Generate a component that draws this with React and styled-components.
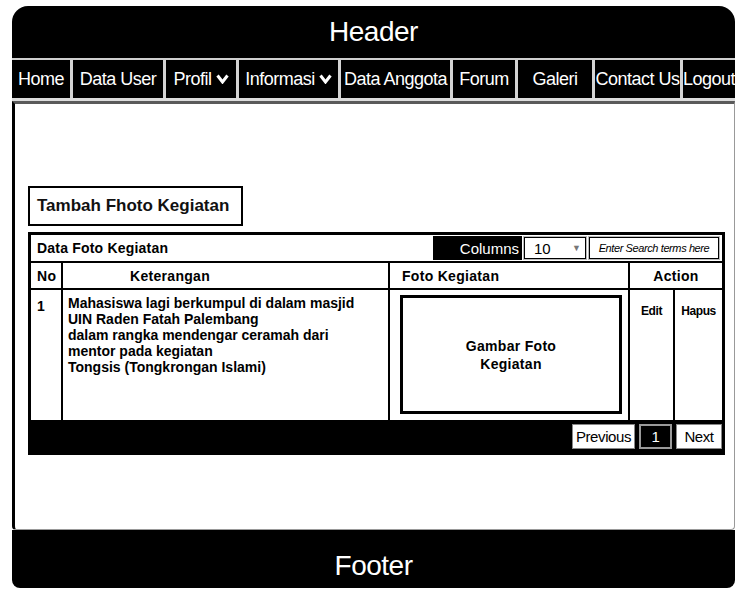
import React from "react";
import styled, { createGlobalStyle } from "styled-components";

const GlobalStyle = createGlobalStyle`
  body {
    margin: 0;
    background: #ffffff;
    font-family: "Liberation Sans", Arial, sans-serif;
  }
`;

const Page = styled.div`
  padding: 6px 0 0 12px;
  width: 735px;
  box-sizing: border-box;
  overflow: hidden;
`;

const Frame = styled.div`
  width: 723px;
  display: flex;
  flex-direction: column;
`;

const Header = styled.header`
  height: 52px;
  background: #000;
  color: #fff;
  border-radius: 16px 16px 0 0;
  display: flex;
  align-items: center;
  justify-content: center;
  font-size: 28px;
  letter-spacing: -0.5px;
`;

const Nav = styled.nav`
  display: flex;
  height: 38px;
  background: #000;
  border-top: 2px solid #cfcfcf;
  border-bottom: 3px solid #dcdcdc;
`;

const NavItem = styled.div`
  flex: none;
  width: ${(p) => p.$w}px;
  box-sizing: border-box;
  display: flex;
  align-items: center;
  justify-content: center;
  gap: 4px;
  color: #fff;
  font-size: 18px;
  letter-spacing: -0.5px;
  white-space: nowrap;
  border-left: ${(p) => (p.$first ? "none" : "3px solid #d4d4d4")};
`;

const Main = styled.main`
  height: 429px;
  box-sizing: border-box;
  background: #fff;
  border-top: 3px solid #5a5a5a;
  border-left: 3px solid #000;
  border-right: 1px solid #999;
  border-bottom: 1px solid #999;
  border-radius: 0 0 4px 4px;
  padding: 82px 0 0 13px;
`;

const AddButton = styled.div`
  display: inline-flex;
  align-items: center;
  width: 215px;
  height: 40px;
  box-sizing: border-box;
  border: 2px solid #000;
  padding-left: 7px;
  font-size: 17px;
  font-weight: bold;
  color: #111;
`;

const Table = styled.div`
  margin-top: 6px;
  width: 697px;
  box-sizing: border-box;
  border: 3px solid #000;
`;

const Toolbar = styled.div`
  height: 26px;
  display: flex;
  align-items: center;
  padding: 0 3px 0 6px;
  border-bottom: 2px solid #000;
`;

const ToolbarTitle = styled.div`
  flex: 1;
  font-size: 14px;
  font-weight: bold;
  letter-spacing: 0.2px;
`;

const ColumnsLabel = styled.div`
  height: 24px;
  width: 89px;
  box-sizing: border-box;
  background: #000;
  color: #fff;
  font-size: 15px;
  display: flex;
  align-items: center;
  justify-content: flex-end;
  padding-right: 3px;
`;

const SelectBox = styled.div`
  margin-left: 2px;
  width: 62px;
  height: 22px;
  box-sizing: border-box;
  border: 1px solid #000;
  box-shadow: 0 0 0 1px #bbb;
  display: flex;
  align-items: center;
  justify-content: space-between;
  padding: 0 4px 0 9px;
  font-size: 15px;
`;

const Arrow = styled.span`
  font-size: 9px;
  color: #777;
`;

const SearchBox = styled.div`
  margin-left: 3px;
  width: 130px;
  height: 22px;
  box-sizing: border-box;
  border: 1px solid #000;
  box-shadow: 0 0 0 1px #bbb;
  display: flex;
  align-items: center;
  justify-content: center;
  font-size: 11px;
  font-style: italic;
  letter-spacing: -0.4px;
  white-space: nowrap;
`;

const Grid = styled.div`
  display: grid;
  grid-template-columns: 32px 327px 240px 45px 47px;
`;

const HeadCell = styled.div`
  grid-column: span ${(p) => p.$span || 1};
  height: 25px;
  border-bottom: 2px solid #000;
  border-right: ${(p) => (p.$last ? "none" : "2px solid #000")};
  display: flex;
  align-items: center;
  justify-content: ${(p) => (p.$center ? "center" : "flex-start")};
  padding-left: ${(p) => p.$pl || 0}px;
  font-size: 14px;
  font-weight: bold;
  letter-spacing: 0.3px;
`;

const Cell = styled.div`
  height: 130px;
  border-right: ${(p) => (p.$last ? "none" : "2px solid #000")};
  font-size: 14px;
  font-weight: bold;
  line-height: 16px;
  padding: ${(p) => p.$pad || "4px 5px"};
  text-align: ${(p) => (p.$center ? "center" : "left")};
  box-sizing: border-box;
  display: flex;
`;

const SmallText = styled.div`
  font-size: 12px;
  width: 100%;
  letter-spacing: -0.4px;
`;

const PhotoBox = styled.div`
  flex: 1;
  border: 3px solid #000;
  display: flex;
  align-items: center;
  justify-content: center;
  text-align: center;
  font-size: 14px;
  letter-spacing: 0.3px;
  line-height: 18px;
`;

const Pager = styled.div`
  height: 32px;
  background: #000;
  display: flex;
  align-items: center;
  justify-content: flex-end;
  gap: 4px;
`;

const PageButton = styled.div`
  height: 25px;
  box-sizing: border-box;
  width: ${(p) => p.$w}px;
  display: flex;
  align-items: center;
  justify-content: center;
  font-size: 15px;
  letter-spacing: -0.4px;
  background: ${(p) => (p.$active ? "#000" : "#fff")};
  color: ${(p) => (p.$active ? "#fff" : "#000")};
  border: ${(p) => (p.$active ? "2px solid #9a9a9a" : "1px solid #888")};
`;

const Footer = styled.footer`
  height: 58px;
  background: #000;
  color: #fff;
  border-radius: 0 0 8px 8px;
  display: flex;
  align-items: center;
  justify-content: center;
  padding-top: 14px;
  box-sizing: border-box;
  font-size: 28px;
  letter-spacing: -0.5px;
`;

const Chevron = () => (
  <svg width="13" height="10" viewBox="0 0 13 10">
    <polyline points="1.5,1.5 6.5,8 11.5,1.5" fill="none" stroke="#fff" strokeWidth="3" />
  </svg>
);

const navItems = [
  { label: "Home", w: 58 },
  { label: "Data User", w: 93 },
  { label: "Profil", w: 73, drop: true },
  { label: "Informasi", w: 102, drop: true },
  { label: "Data Anggota", w: 112 },
  { label: "Forum", w: 65 },
  { label: "Galeri", w: 77 },
  { label: "Contact Us", w: 88 },
  { label: "Logout", w: 55 },
];

export default function App() {
  return (
    <Page>
      <GlobalStyle />
      <Frame>
        <Header>Header</Header>
        <Nav>
          {navItems.map((item, i) => (
            <NavItem key={item.label} $w={item.w} $first={i === 0}>
              {item.label}
              {item.drop && <Chevron />}
            </NavItem>
          ))}
        </Nav>
        <Main>
          <AddButton>Tambah Fhoto Kegiatan</AddButton>
          <Table>
            <Toolbar>
              <ToolbarTitle>Data Foto Kegiatan</ToolbarTitle>
              <ColumnsLabel>Columns</ColumnsLabel>
              <SelectBox>
                10 <Arrow>▼</Arrow>
              </SelectBox>
              <SearchBox>Enter Search terms here</SearchBox>
            </Toolbar>
            <Grid>
              <HeadCell $pl={6}>No</HeadCell>
              <HeadCell $pl={67}>Keterangan</HeadCell>
              <HeadCell $pl={12}>Foto Kegiatan</HeadCell>
              <HeadCell $span={2} $center $last>
                Action
              </HeadCell>
              <Cell $pad="8px 6px">1</Cell>
              <Cell $pad="5px 5px">
                <div>
                  Mahasiswa lagi berkumpul di dalam masjid
                  <br />
                  UIN Raden Fatah Palembang
                  <br />
                  dalam rangka mendengar ceramah dari
                  <br />
                  mentor pada kegiatan
                  <br />
                  Tongsis (Tongkrongan Islami)
                </div>
              </Cell>
              <Cell $pad="5px 6px 6px 10px">
                <PhotoBox>
                  Gambar Foto
                  <br />
                  Kegiatan
                </PhotoBox>
              </Cell>
              <Cell $center $pad="13px 0 0">
                <SmallText>Edit</SmallText>
              </Cell>
              <Cell $center $last $pad="13px 0 0">
                <SmallText>Hapus</SmallText>
              </Cell>
            </Grid>
            <Pager>
              <PageButton $w={63}>Previous</PageButton>
              <PageButton $w={33} $active>
                1
              </PageButton>
              <PageButton $w={46}>Next</PageButton>
            </Pager>
          </Table>
        </Main>
        <Footer>Footer</Footer>
      </Frame>
    </Page>
  );
}
